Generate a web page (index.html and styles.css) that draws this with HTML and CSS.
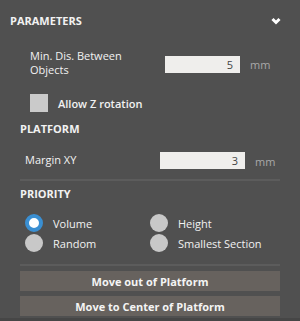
FILE: index.html
```html
<!DOCTYPE html>
<html lang="en">
<head>
    <meta charset="UTF-8">
    <title>Parameters</title>
    <link rel="stylesheet" href="styles.css">
</head>
<body>
    <div class="panel">
        <div class="panel-head">
            <span class="panel-title">PARAMETERS</span>
            <svg class="chevron" width="10" height="8" viewBox="0 0 10 8">
                <polyline points="1.5,2 5,5.5 8.5,2" fill="none" stroke="#fff" stroke-width="3"/>
            </svg>
        </div>

        <div class="field field-wide">
            <label class="field-label">Min. Dis. Between<br>Objects</label>
            <input class="field-input input-a" type="text" value="5">
            <span class="unit">mm</span>
        </div>

        <div class="check-row">
            <span class="check-box"></span>
            <span class="check-label">Allow Z rotation</span>
        </div>

        <h3 class="section-title">PLATFORM</h3>
        <div class="field field-margin">
            <label class="field-label">Margin XY</label>
            <input class="field-input input-b" type="text" value="3">
            <span class="unit">mm</span>
        </div>

        <div class="divider"></div>

        <h3 class="section-title">PRIORITY</h3>
        <div class="radio-grid">
            <div class="radio-item"><span class="radio checked"></span>Volume</div>
            <div class="radio-item"><span class="radio"></span>Height</div>
            <div class="radio-item"><span class="radio"></span>Random</div>
            <div class="radio-item"><span class="radio"></span>Smallest Section</div>
        </div>

        <div class="divider divider-low"></div>

        <button class="action-btn">Move out of Platform</button>
        <button class="action-btn">Move to Center of Platform</button>
    </div>
</body>
</html>
```

FILE: styles.css
```css
body {
    margin: 0;
    background-color: #505050;
    font-family: 'Open Sans', sans-serif;
    font-size: 11px;
    color: #f2f2f2;
}
.panel {
    height: 318px;
    border-bottom: 3px solid #464646;
}
.panel-head {
    display: flex;
    justify-content: space-between;
    align-items: center;
    padding: 10px 19px 0 10px;
    height: 20px;
}
.panel-title {
    font-weight: bold;
}
.chevron {
    display: block;
    margin-top: 2px;
}
.field {
    display: flex;
    align-items: center;
}
.field-wide {
    padding-left: 30px;
    margin-top: 19px;
    line-height: 14px;
}
.field-label {
    width: 135px;
}
.field-input {
    box-sizing: border-box;
    height: 17px;
    border: none;
    background-color: #efeeec;
    color: #444;
    font-family: 'Open Sans', sans-serif;
    font-size: 11px;
    text-align: right;
    padding: 0 7px;
    margin-top: 2px;
}
.input-a {
    width: 75px;
}
.input-b {
    width: 85px;
}
.unit {
    color: #a9a9a9;
    margin-left: 10px;
    margin-top: 4px;
}
.check-row {
    display: flex;
    align-items: center;
    padding-left: 30px;
    margin-top: 17px;
}
.check-box {
    width: 18px;
    height: 18px;
    background-color: #cacaca;
    margin-right: 10px;
}
.check-label {
    font-weight: 600;
}
.section-title {
    margin: 0;
    padding-left: 20px;
    font-size: 11px;
    font-weight: bold;
    line-height: 14px;
}
.panel > .section-title:first-of-type {
    margin-top: 10px;
}
.field-margin {
    padding-left: 25px;
    margin-top: 14px;
}
.field-margin .field-label {
    width: 135px;
}
.divider {
    height: 2px;
    background-color: #5c5c5c;
    margin: 10px 20px 6px 20px;
}
.radio-grid {
    display: grid;
    grid-template-columns: 125px 1fr;
    row-gap: 2px;
    padding-left: 25px;
    margin-top: 13px;
}
.radio-item {
    display: flex;
    align-items: center;
    height: 18px;
}
.radio {
    box-sizing: border-box;
    width: 18px;
    height: 18px;
    border-radius: 50%;
    background-color: #c8c8c8;
    margin-right: 10px;
}
.radio.checked {
    background-color: #fff;
    border: 4px solid #3a8fd2;
}
.divider-low {
    margin: 12px 20px 5px 20px;
}
.action-btn {
    display: block;
    width: 260px;
    height: 20px;
    margin: 0 20px 5px 20px;
    padding: 0;
    border: none;
    background-color: #67625e;
    color: #f4f4f4;
    font-family: 'Open Sans', sans-serif;
    font-size: 11px;
    font-weight: bold;
}
```
